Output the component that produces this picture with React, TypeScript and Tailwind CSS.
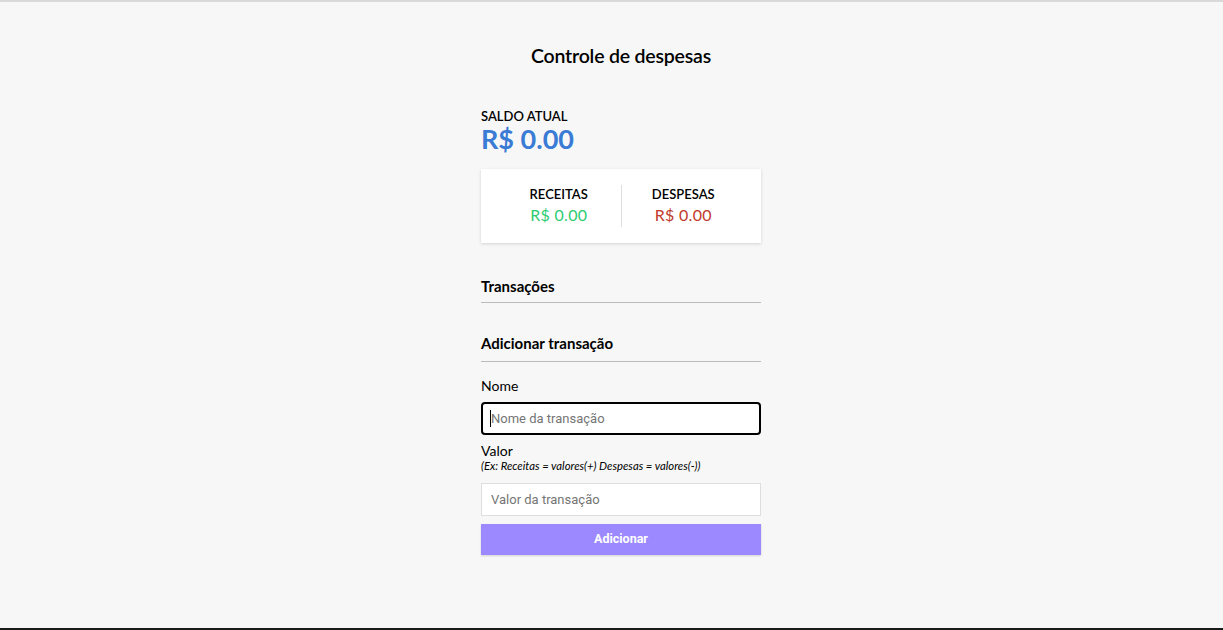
export default function App() {
  return (
    <div className="min-h-[630px] bg-[#f7f7f7] border-t-2 border-[#d9d9d9] flex flex-col font-['Lato','Noto_Sans',sans-serif] text-black">
      <div className="flex-1 flex flex-col items-center pl-[19px]">
        <h2 className="mt-[42px] text-[19.5px] font-semibold leading-6 tracking-[-0.2px]">Controle de despesas</h2>

        <div className="w-[280px] mt-[40px]">
          {/* Saldo */}
          <h4 className="text-[13px] font-semibold leading-4 uppercase">Saldo atual</h4>
          <h1 className="text-[27px] font-bold leading-8 text-[#3a7bd5] -mt-[1px]">R$ 0.00</h1>

          {/* Receitas / Despesas */}
          <div className="mt-[14px] bg-white shadow-[0_1px_3px_rgba(0,0,0,0.15)] flex px-4 py-4">
            <div className="flex-1 flex flex-col items-center border-r border-[#dedede]">
              <h4 className="text-[13px] font-semibold uppercase leading-4 mt-[1px]">Receitas</h4>
              <p className="text-[16px] leading-5 text-[#2ecc71] mt-[3px] mb-[2px] tracking-[0.3px]">R$ 0.00</p>
            </div>
            <div className="flex-1 flex flex-col items-center">
              <h4 className="text-[13px] font-semibold uppercase leading-4 mt-[1px]">Despesas</h4>
              <p className="text-[16px] leading-5 text-[#c0392b] mt-[3px] mb-[2px] tracking-[0.3px]">R$ 0.00</p>
            </div>
          </div>

          {/* Transações */}
          <h3 className="mt-[33px] text-[15px] font-bold leading-5 pb-[6px] border-b border-[#bbb]">Transações</h3>

          {/* Form */}
          <h3 className="mt-[30px] text-[15px] font-bold leading-5 pb-[8px] border-b border-[#bbb]">Adicionar transação</h3>

          <form className="mt-[14px]" onSubmit={(e) => e.preventDefault()}>
            <label className="block text-[14px] leading-5">Nome</label>
            <div className="mt-[6px] h-[33px] bg-white border-2 border-black rounded-[4px] flex items-center px-[7px]">
              <span className="w-px h-[17px] bg-black" />
              <span className="text-[13px] text-[#757575] font-['Roboto','Liberation_Sans',sans-serif]">Nome da transação</span>
            </div>

            <label className="block text-[14px] leading-5 mt-[6px]">Valor</label>
            <small className="block text-[11.3px] italic leading-3 -mt-[1px]">(Ex: Receitas = valores(+) Despesas = valores(-))</small>
            <input
              type="text"
              placeholder="Valor da transação"
              className="mt-[11px] w-full h-[33px] bg-white border border-[#dedede] px-[9px] text-[13px] font-['Roboto','Liberation_Sans',sans-serif] placeholder:text-[#757575] outline-none"
            />

            <button className="mt-[8px] w-full h-[31px] bg-[#9c88ff] text-white text-[12.5px] font-bold font-['Roboto','Liberation_Sans',sans-serif] shadow-[0_1px_2px_rgba(0,0,0,0.15)]">
              Adicionar
            </button>
          </form>
        </div>
      </div>
      <div className="h-[2px] bg-[#1a1a1a]" />
    </div>
  );
}
